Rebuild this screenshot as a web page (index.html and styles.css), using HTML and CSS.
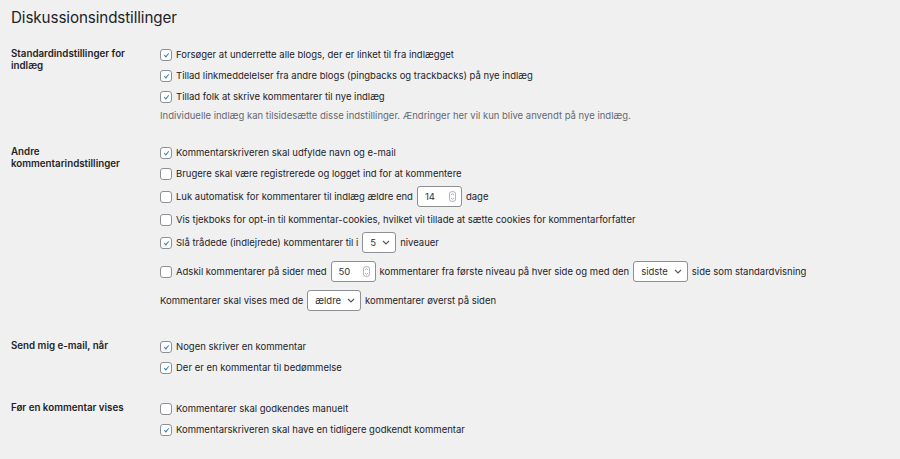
FILE: index.html
```html
<!DOCTYPE html>
<html lang="da">
<head>
    <meta charset="UTF-8">
    <meta name="viewport" content="width=device-width, initial-scale=1.0">
    <title>Diskussionsindstillinger</title>
    <link rel="stylesheet" href="styles.css">
</head>
<body>
    <div class="wrap">
        <h1>Diskussionsindstillinger</h1>

        <div class="setting">
            <div class="setting-label">Standardindstillinger for indlæg</div>
            <div class="setting-options">
                <label class="option">
                    <span class="box checked"><svg viewBox="0 0 20 20"><path d="M14.83 4.89l1.34.94-5.81 8.38H9.02L5.78 9.67l1.34-1.25 2.57 2.4z"/></svg></span>
                    <span>Forsøger at underrette alle blogs, der er linket til fra indlægget</span>
                </label>
                <label class="option">
                    <span class="box checked"><svg viewBox="0 0 20 20"><path d="M14.83 4.89l1.34.94-5.81 8.38H9.02L5.78 9.67l1.34-1.25 2.57 2.4z"/></svg></span>
                    <span>Tillad linkmeddelelser fra andre blogs (pingbacks og trackbacks) på nye indlæg</span>
                </label>
                <label class="option">
                    <span class="box checked"><svg viewBox="0 0 20 20"><path d="M14.83 4.89l1.34.94-5.81 8.38H9.02L5.78 9.67l1.34-1.25 2.57 2.4z"/></svg></span>
                    <span>Tillad folk at skrive kommentarer til nye indlæg</span>
                </label>
                <p class="description">Individuelle indlæg kan tilsidesætte disse indstillinger. Ændringer her vil kun blive anvendt på nye indlæg.</p>
            </div>
        </div>

        <div class="setting setting-long">
            <div class="setting-label">Andre kommentarindstillinger</div>
            <div class="setting-options">
                <label class="option">
                    <span class="box checked"><svg viewBox="0 0 20 20"><path d="M14.83 4.89l1.34.94-5.81 8.38H9.02L5.78 9.67l1.34-1.25 2.57 2.4z"/></svg></span>
                    <span>Kommentarskriveren skal udfylde navn og e-mail</span>
                </label>
                <label class="option">
                    <span class="box"></span>
                    <span>Brugere skal være registrerede og logget ind for at kommentere</span>
                </label>
                <label class="option option-field">
                    <span class="box"></span>
                    <span>Luk automatisk for kommentarer til indlæg ældre end</span>
                    <span class="field field-number">
                        <span>14</span>
                        <svg class="spinner" viewBox="0 0 8 12"><rect x="0.5" y="0.5" width="7" height="11" rx="2.5"/><path d="M2.3 4.3L4 2.7l1.7 1.6M2.3 7.7L4 9.3l1.7-1.6"/></svg>
                    </span>
                    <span>dage</span>
                </label>
                <label class="option">
                    <span class="box"></span>
                    <span>Vis tjekboks for opt-in til kommentar-cookies, hvilket vil tillade at sætte cookies for kommentarforfatter</span>
                </label>
                <label class="option option-field">
                    <span class="box checked"><svg viewBox="0 0 20 20"><path d="M14.83 4.89l1.34.94-5.81 8.38H9.02L5.78 9.67l1.34-1.25 2.57 2.4z"/></svg></span>
                    <span>Slå trådede (indlejrede) kommentarer til i</span>
                    <span class="field field-select">
                        <span>5</span>
                        <svg class="chevron" viewBox="0 0 8 5"><path d="M1 1l3 3 3-3"/></svg>
                    </span>
                    <span>niveauer</span>
                </label>
                <label class="option option-field option-spaced">
                    <span class="box"></span>
                    <span>Adskil kommentarer på sider med</span>
                    <span class="field field-number">
                        <span>50</span>
                        <svg class="spinner" viewBox="0 0 8 12"><rect x="0.5" y="0.5" width="7" height="11" rx="2.5"/><path d="M2.3 4.3L4 2.7l1.7 1.6M2.3 7.7L4 9.3l1.7-1.6"/></svg>
                    </span>
                    <span>kommentarer fra første niveau på hver side og med den</span>
                    <span class="field field-select">
                        <span>sidste</span>
                        <svg class="chevron" viewBox="0 0 8 5"><path d="M1 1l3 3 3-3"/></svg>
                    </span>
                    <span>side som standardvisning</span>
                </label>
                <label class="option option-field option-spaced">
                    <span>Kommentarer skal vises med de</span>
                    <span class="field field-select">
                        <span>ældre</span>
                        <svg class="chevron" viewBox="0 0 8 5"><path d="M1 1l3 3 3-3"/></svg>
                    </span>
                    <span>kommentarer øverst på siden</span>
                </label>
            </div>
        </div>

        <div class="setting">
            <div class="setting-label">Send mig e-mail, når</div>
            <div class="setting-options">
                <label class="option">
                    <span class="box checked"><svg viewBox="0 0 20 20"><path d="M14.83 4.89l1.34.94-5.81 8.38H9.02L5.78 9.67l1.34-1.25 2.57 2.4z"/></svg></span>
                    <span>Nogen skriver en kommentar</span>
                </label>
                <label class="option">
                    <span class="box checked"><svg viewBox="0 0 20 20"><path d="M14.83 4.89l1.34.94-5.81 8.38H9.02L5.78 9.67l1.34-1.25 2.57 2.4z"/></svg></span>
                    <span>Der er en kommentar til bedømmelse</span>
                </label>
            </div>
        </div>

        <div class="setting">
            <div class="setting-label">Før en kommentar vises</div>
            <div class="setting-options">
                <label class="option">
                    <span class="box"></span>
                    <span>Kommentarer skal godkendes manuelt</span>
                </label>
                <label class="option">
                    <span class="box checked"><svg viewBox="0 0 20 20"><path d="M14.83 4.89l1.34.94-5.81 8.38H9.02L5.78 9.67l1.34-1.25 2.57 2.4z"/></svg></span>
                    <span>Kommentarskriveren skal have en tidligere godkendt kommentar</span>
                </label>
            </div>
        </div>
    </div>
</body>
</html>
```

FILE: styles.css
```css
body {
    margin: 0;
    background-color: #f0f0f1;
    font-family: Inter, "Liberation Sans", Arial, sans-serif;
    font-size: 9.5px;
    color: #1d2327;
}

.wrap {
    padding: 0 11px;
}

h1 {
    margin: 0 0 5px;
    padding-top: 6px;
    font-size: 15.2px;
    font-weight: 400;
    line-height: 23px;
    letter-spacing: -0.1px;
}

.setting {
    display: grid;
    grid-template-columns: 149px 1fr;
    padding: 10px 0;
}

.setting-long {
    padding-bottom: 13px;
}

.setting-label {
    width: 132px;
    padding-top: 4px;
    font-size: 9.75px;
    font-weight: 600;
    line-height: 12px;
}

.setting-options {
    display: flex;
    flex-direction: column;
}

.option {
    display: flex;
    align-items: center;
    gap: 4px;
    height: 21px;
    white-space: nowrap;
}

.option-field {
    height: 25px;
}

.option-spaced {
    margin-top: 4px;
}

.box {
    box-sizing: border-box;
    width: 12px;
    height: 12px;
    border: 1px solid #8c8f94;
    border-radius: 3px;
    background-color: #fff;
    display: flex;
    align-items: center;
    justify-content: center;
    flex-shrink: 0;
}

.box svg {
    width: 15px;
    height: 15px;
    fill: #3582c4;
    margin-top: 1px;
}

.description {
    margin: 2px 0 0;
    line-height: 13px;
    color: #646970;
}

.field {
    box-sizing: border-box;
    display: inline-flex;
    align-items: center;
    justify-content: space-between;
    height: 21px;
    padding: 0 5px 0 7px;
    border: 1px solid #8c8f94;
    border-radius: 3px;
    background-color: #fff;
    color: #2c3338;
}

.field-number {
    width: 45px;
}

.field-select {
    gap: 6px;
}

.spinner {
    width: 7px;
    height: 11px;
    fill: none;
    stroke: #8c8f94;
    stroke-width: 0.8;
}

.chevron {
    width: 8px;
    height: 5px;
    fill: none;
    stroke: #50575e;
    stroke-width: 1.1;
}
```
